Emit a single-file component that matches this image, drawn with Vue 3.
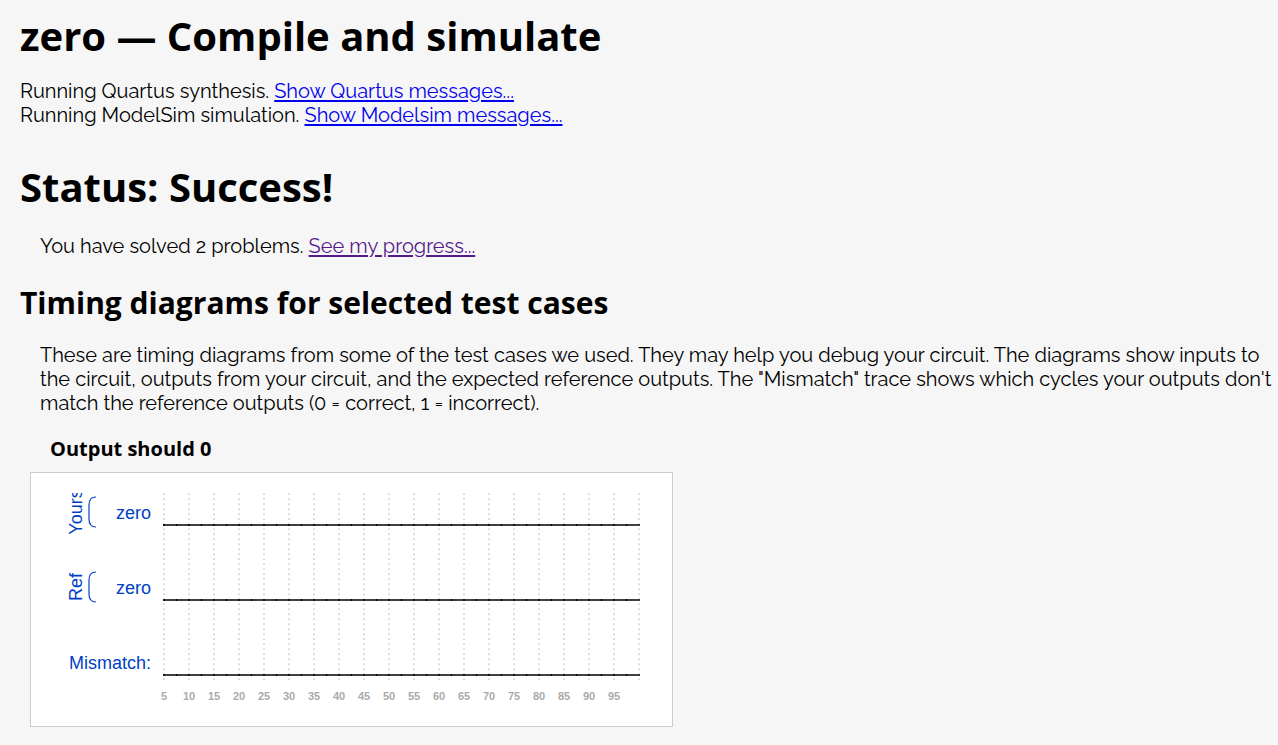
<script setup>
const ticks = Array.from({ length: 20 }, (_, i) => ({ x: 133 + i * 25, label: (i + 1) * 5 }))
const labels = ticks.slice(0, 19)
const joints = Array.from({ length: 38 }, (_, i) => 133 + i * 12.5)
const lanes = [
  { y: 52, name: 'zero', group: 'Yours' },
  { y: 127, name: 'zero', group: 'Ref' },
  { y: 202, name: 'Mismatch:', group: '' },
]
const groups = lanes.filter((lane) => lane.group)
</script>

<template>
  <main class="page">
    <h1>zero — Compile and simulate</h1>
    <div>Running Quartus synthesis. <a href="#quartus">Show Quartus messages...</a></div>
    <div>Running ModelSim simulation. <a href="#modelsim">Show Modelsim messages...</a></div>

    <h1 class="status">Status: Success!</h1>
    <p>You have solved 2 problems. <a class="visited" href="#progress">See my progress...</a></p>

    <h2>Timing diagrams for selected test cases</h2>
    <p>
      These are timing diagrams from some of the test cases we used. They may help you debug your circuit. The diagrams show inputs to
      the circuit, outputs from your circuit, and the expected reference outputs. The "Mismatch" trace shows which cycles your outputs don't
      match the reference outputs (0 = correct, 1 = incorrect).
    </p>

    <h3>Output should 0</h3>
    <div class="diagram">
      <svg width="641" height="253" viewBox="0 0 641 253" role="img" aria-label="Timing diagram">
        <defs>
          <clipPath id="drawing-area"><rect x="0" y="20" width="641" height="213" /></clipPath>
        </defs>
        <g clip-path="url(#drawing-area)">
          <line v-for="t in ticks" :key="t.x" class="grid" :x1="t.x" :x2="t.x" y1="20.5" y2="208" />
          <text v-for="t in labels" :key="t.label" class="tick" :x="t.x" y="227">{{ t.label }}</text>
          <g v-for="lane in lanes" :key="lane.y">
            <text class="name" x="120" :y="lane.y - 6">{{ lane.name }}</text>
            <line class="wave" x1="132" x2="609" :y1="lane.y" :y2="lane.y" />
            <line v-for="x in joints" :key="x" class="joint" :x1="x - 0.6" :x2="x + 0.6" :y1="lane.y" :y2="lane.y" />
          </g>
          <g v-for="g in groups" :key="g.group">
            <text class="group" :transform="`translate(51 ${g.y - 13}) rotate(-90)`">{{ g.group }}</text>
            <path class="brace" :d="`M65 ${g.y - 28} c-5 0 -7 3 -7 8 v14 c0 5 2 8 7 8`" />
          </g>
        </g>
      </svg>
    </div>
  </main>
</template>

<style>
body {
  margin: 0;
  background: #f6f6f6;
}
</style>

<style scoped>
.page {
  padding: 8px 0 18px 20px;
  color: #000;
  font: 400 20px/24px Raleway, Lato, "Open Sans", sans-serif;
  font-variant-numeric: oldstyle-nums;
  font-variant-ligatures: no-contextual;
}
h1,
h2,
h3 {
  margin: 0;
  font-family: "Open Sans", sans-serif;
  font-weight: 700;
  font-variant-numeric: normal;
}
h1 {
  margin-bottom: 16px;
  font-size: 40px;
  line-height: 55px;
}
.status {
  margin: 32px 0 20px;
}
h2 {
  margin: 24px 0 20px;
  font-size: 30px;
  line-height: 41px;
}
h3 {
  margin: 20px 0 9px 30px;
  font-size: 20px;
  line-height: 28px;
}
p {
  margin: 0 0 0 20px;
}
a {
  color: #0000ee;
  text-underline-offset: 2px;
  text-decoration-thickness: 2px;
}
a.visited {
  color: #551a8b;
}
.diagram {
  width: fit-content;
  margin-left: 10px;
  border: 1px solid #ccc;
  background: #fff;
}
svg {
  display: block;
  font-family: "Liberation Sans", Arial, sans-serif;
  font-variant-numeric: normal;
}
.grid {
  stroke: #aaa;
  stroke-width: 1.2;
  stroke-dasharray: 1.2 3.8;
}
.wave {
  stroke: #000;
  stroke-width: 1.3;
}
.joint {
  stroke: #000;
  stroke-width: 2;
}
.name,
.group {
  fill: #0041c4;
  font-size: 18px;
}
.name {
  text-anchor: end;
}
.group {
  text-anchor: middle;
}
.tick {
  fill: #aaa;
  font-size: 11px;
  font-weight: 700;
  text-anchor: middle;
}
.brace {
  fill: none;
  stroke: #0041c4;
  stroke-width: 1.2;
}
</style>
